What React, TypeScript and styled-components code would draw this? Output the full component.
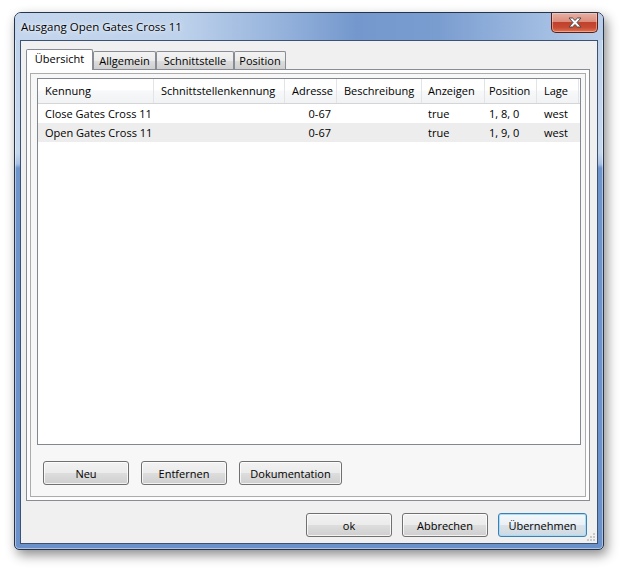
import React from 'react';
import styled, { createGlobalStyle } from 'styled-components';

const GlobalStyle = createGlobalStyle`
  html,
  body {
    margin: 0;
    background: #ffffff;
  }

  body {
    font-family: 'Open Sans', 'Noto Sans', 'DejaVu Sans', sans-serif;
    font-size: 11px;
    color: #000000;
  }
`;

type Column = { title: string; width: number; pad: number; right?: boolean };

const COLUMNS: Column[] = [
  { title: 'Kennung', width: 116, pad: 7 },
  { title: 'Schnittstellenkennung', width: 131, pad: 7 },
  { title: 'Adresse', width: 52, pad: 7, right: true },
  { title: 'Beschreibung', width: 85, pad: 7 },
  { title: 'Anzeigen', width: 63, pad: 6 },
  { title: 'Position', width: 52, pad: 4 },
  { title: 'Lage', width: 42, pad: 7 },
];

const ROWS = [
  ['Close Gates Cross 11', '', '0-67', '', 'true', '1, 8, 0', 'west'],
  ['Open Gates Cross 11', '', '0-67', '', 'true', '1, 9, 0', 'west'],
];

const TABS = [
  { label: 'Übersicht', width: 67 },
  { label: 'Allgemein', width: 63 },
  { label: 'Schnittstelle', width: 78 },
  { label: 'Position', width: 52 },
];

const GRID = COLUMNS.map((c) => `${c.width}px`).join(' ');

export default function App() {
  return (
    <>
      <GlobalStyle />
      <Page>
        <Window>
          <TitleBar>
            <Title>Ausgang Open Gates Cross 11</Title>
            <CloseButton aria-label="Schließen">
              <svg width="14" height="11" viewBox="0 0 14 11">
                <polygon
                  points="1,1 4.5,1 7,3.4 9.5,1 13,1 9,5.5 13,10 9.5,10 7,7.6 4.5,10 1,10 5,5.5"
                  fill="#ffffff"
                  stroke="#4a4a4a"
                  strokeWidth="1"
                  strokeLinejoin="round"
                />
              </svg>
            </CloseButton>
          </TitleBar>

          <Client>
            <TabStrip>
              {TABS.map((t, i) => (
                <Tab key={t.label} $active={i === 0} $width={t.width}>
                  {t.label}
                </Tab>
              ))}
            </TabStrip>

            <TabPanel>
              <InnerPanel>
                <TableBox>
                  <HeaderRow>
                    {COLUMNS.map((c) => (
                      <HeaderCell key={c.title} $pad={c.pad}>
                        {c.title}
                      </HeaderCell>
                    ))}
                  </HeaderRow>
                  {ROWS.map((row, r) => (
                    <Row key={r} $alt={r % 2 === 1}>
                      {row.map((value, i) => (
                        <Cell key={i} $pad={COLUMNS[i].pad} $right={COLUMNS[i].right}>
                          {value}
                        </Cell>
                      ))}
                    </Row>
                  ))}
                </TableBox>

                <ButtonRow>
                  <Button $width={86}>Neu</Button>
                  <Button $width={86}>Entfernen</Button>
                  <Button $width={103}>Dokumentation</Button>
                </ButtonRow>
              </InnerPanel>
            </TabPanel>

            <DialogButtons>
              <Button $width={86}>ok</Button>
              <Button $width={86}>Abbrechen</Button>
              <Button $width={89} $default>
                Übernehmen
              </Button>
            </DialogButtons>

            <Grip width="8" height="8" viewBox="0 0 8 8">
              <rect x="6" y="0" width="2" height="2" fill="#c8c8c8" />
              <rect x="3" y="3" width="2" height="2" fill="#c8c8c8" />
              <rect x="6" y="3" width="2" height="2" fill="#c8c8c8" />
              <rect x="0" y="6" width="2" height="2" fill="#c8c8c8" />
              <rect x="3" y="6" width="2" height="2" fill="#c8c8c8" />
              <rect x="6" y="6" width="2" height="2" fill="#c8c8c8" />
            </Grip>
          </Client>
        </Window>
      </Page>
    </>
  );
}

const Page = styled.div`
  padding: 12px 0 0 14px;
  width: 622px;
  height: 570px;
  box-sizing: border-box;
`;

const Window = styled.div`
  display: flex;
  flex-direction: column;
  width: 590px;
  height: 538px;
  box-sizing: border-box;
  padding: 0 5px 5px;
  border: 1px solid #26344a;
  border-radius: 7px 7px 5px 5px;
  background: linear-gradient(
    180deg,
    #bdd1ea 0px,
    #c6d8ee 140px,
    #a9c2e4 151px,
    #6f95cd 155px,
    #6a91ca 100%
  );
  box-shadow: inset 0 0 0 1px rgba(255, 255, 255, 0.45), 3px 5px 12px rgba(0, 0, 0, 0.45);
`;

const TitleBar = styled.div`
  display: flex;
  align-items: flex-start;
  justify-content: space-between;
  height: 27px;
  margin: 0 -5px;
  border-radius: 6px 6px 0 0;
  background: linear-gradient(
    90deg,
    #c4d6ed 0%,
    #bed2eb 28%,
    #96b3dc 45%,
    #7498cd 58%,
    #7a9dd0 72%,
    #a2bde2 90%,
    #b9cee9 100%
  );
`;

const Title = styled.div`
  padding-left: 6px;
  line-height: 27px;
  font-size: 11.5px;
  color: #000000;
  text-shadow: 0 0 6px rgba(255, 255, 255, 0.9), 0 0 2px rgba(255, 255, 255, 0.8);
`;

const CloseButton = styled.div`
  display: flex;
  align-items: center;
  justify-content: center;
  width: 47px;
  height: 20px;
  margin-right: 5px;
  box-sizing: border-box;
  border: 1px solid #5a1e17;
  border-top: none;
  border-radius: 0 0 5px 5px;
  background: linear-gradient(
    180deg,
    #e6b0a4 0%,
    #dc8e7d 45%,
    #c1412c 50%,
    #c64a33 75%,
    #e0724f 100%
  );
  box-shadow: inset 0 0 0 1px rgba(255, 215, 200, 0.5);
`;

const Client = styled.div`
  position: relative;
  display: flex;
  flex-direction: column;
  flex: 1;
  padding: 8px 10px 6px 5px;
  border: 1px solid #3b5274;
  background: #f0f0f0;
`;

const TabStrip = styled.div`
  position: relative;
  z-index: 1;
  display: flex;
  align-items: flex-end;
  height: 20px;
`;

const Tab = styled.div<{ $active?: boolean; $width: number }>`
  display: flex;
  align-items: center;
  justify-content: center;
  box-sizing: border-box;
  width: ${(p) => p.$width}px;
  height: ${(p) => (p.$active ? 21 : 18)}px;
  margin-bottom: ${(p) => (p.$active ? -1 : 0)}px;
  padding-bottom: ${(p) => (p.$active ? 3 : 1)}px;
  border: 1px solid #898c95;
  border-bottom: none;
  border-radius: 2px 2px 0 0;
  background: ${(p) =>
    p.$active
      ? '#ffffff'
      : 'linear-gradient(180deg, #f3f3f3 0%, #ebebeb 50%, #dddddd 51%, #cfcfcf 100%)'};
  white-space: nowrap;
`;

const TabPanel = styled.div`
  display: flex;
  height: 432px;
  margin-right: -3px;
  box-sizing: border-box;
  padding: 3px;
  border: 1px solid #898c95;
  background: #fdfdfd;
`;

const InnerPanel = styled.div`
  display: flex;
  flex-direction: column;
  flex: 1;
  padding: 4px 4px 0 6px;
  border: 1px solid #acacac;
  background: #f7f7f7;
`;

const TableBox = styled.div`
  height: 367px;
  box-sizing: border-box;
  border: 1px solid #828790;
  background: #ffffff;
  overflow: hidden;
`;

const HeaderRow = styled.div`
  display: grid;
  grid-template-columns: ${GRID};
  height: 25px;
  box-sizing: border-box;
  border-bottom: 1px solid #d5d5d5;
  background: linear-gradient(180deg, #ffffff 0%, #ffffff 45%, #f7f8f9 50%, #f1f2f4 100%);
`;

const HeaderCell = styled.div<{ $pad: number }>`
  padding-left: ${(p) => p.$pad}px;
  line-height: 24px;
  border-right: 1px solid #e2e4e7;
  white-space: nowrap;
  overflow: hidden;
`;

const Row = styled.div<{ $alt?: boolean }>`
  display: grid;
  grid-template-columns: ${GRID};
  height: 19px;
  background: ${(p) => (p.$alt ? '#ededed' : '#ffffff')};
`;

const Cell = styled.div<{ $pad: number; $right?: boolean }>`
  padding: ${(p) => (p.$right ? '0 6px 0 0' : `0 0 0 ${p.$pad}px`)};
  text-align: ${(p) => (p.$right ? 'right' : 'left')};
  line-height: 19px;
  white-space: nowrap;
  overflow: hidden;
`;

const ButtonRow = styled.div`
  display: flex;
  gap: 12px;
  margin-top: 16px;
  padding-left: 6px;
`;

const DialogButtons = styled.div`
  display: flex;
  justify-content: flex-end;
  gap: 10px;
  margin-top: 12px;
`;

const Button = styled.div<{ $width: number; $default?: boolean }>`
  display: flex;
  align-items: center;
  justify-content: center;
  box-sizing: border-box;
  width: ${(p) => p.$width}px;
  height: 24px;
  border: 1px solid ${(p) => (p.$default ? '#3c7fb1' : '#707070')};
  border-radius: 3px;
  background: ${(p) =>
    p.$default
      ? 'linear-gradient(180deg, #f4f8fb 0%, #eaf0f5 50%, #dbe3ea 51%, #cfd8e0 100%)'
      : 'linear-gradient(180deg, #f2f2f2 0%, #ebebeb 50%, #dddddd 51%, #cfcfcf 100%)'};
  box-shadow: inset 0 0 0 1px ${(p) => (p.$default ? '#a6dcf7' : 'rgba(255, 255, 255, 0.75)')};
  white-space: nowrap;
`;

const Grip = styled.svg`
  position: absolute;
  right: 2px;
  bottom: 2px;
`;
